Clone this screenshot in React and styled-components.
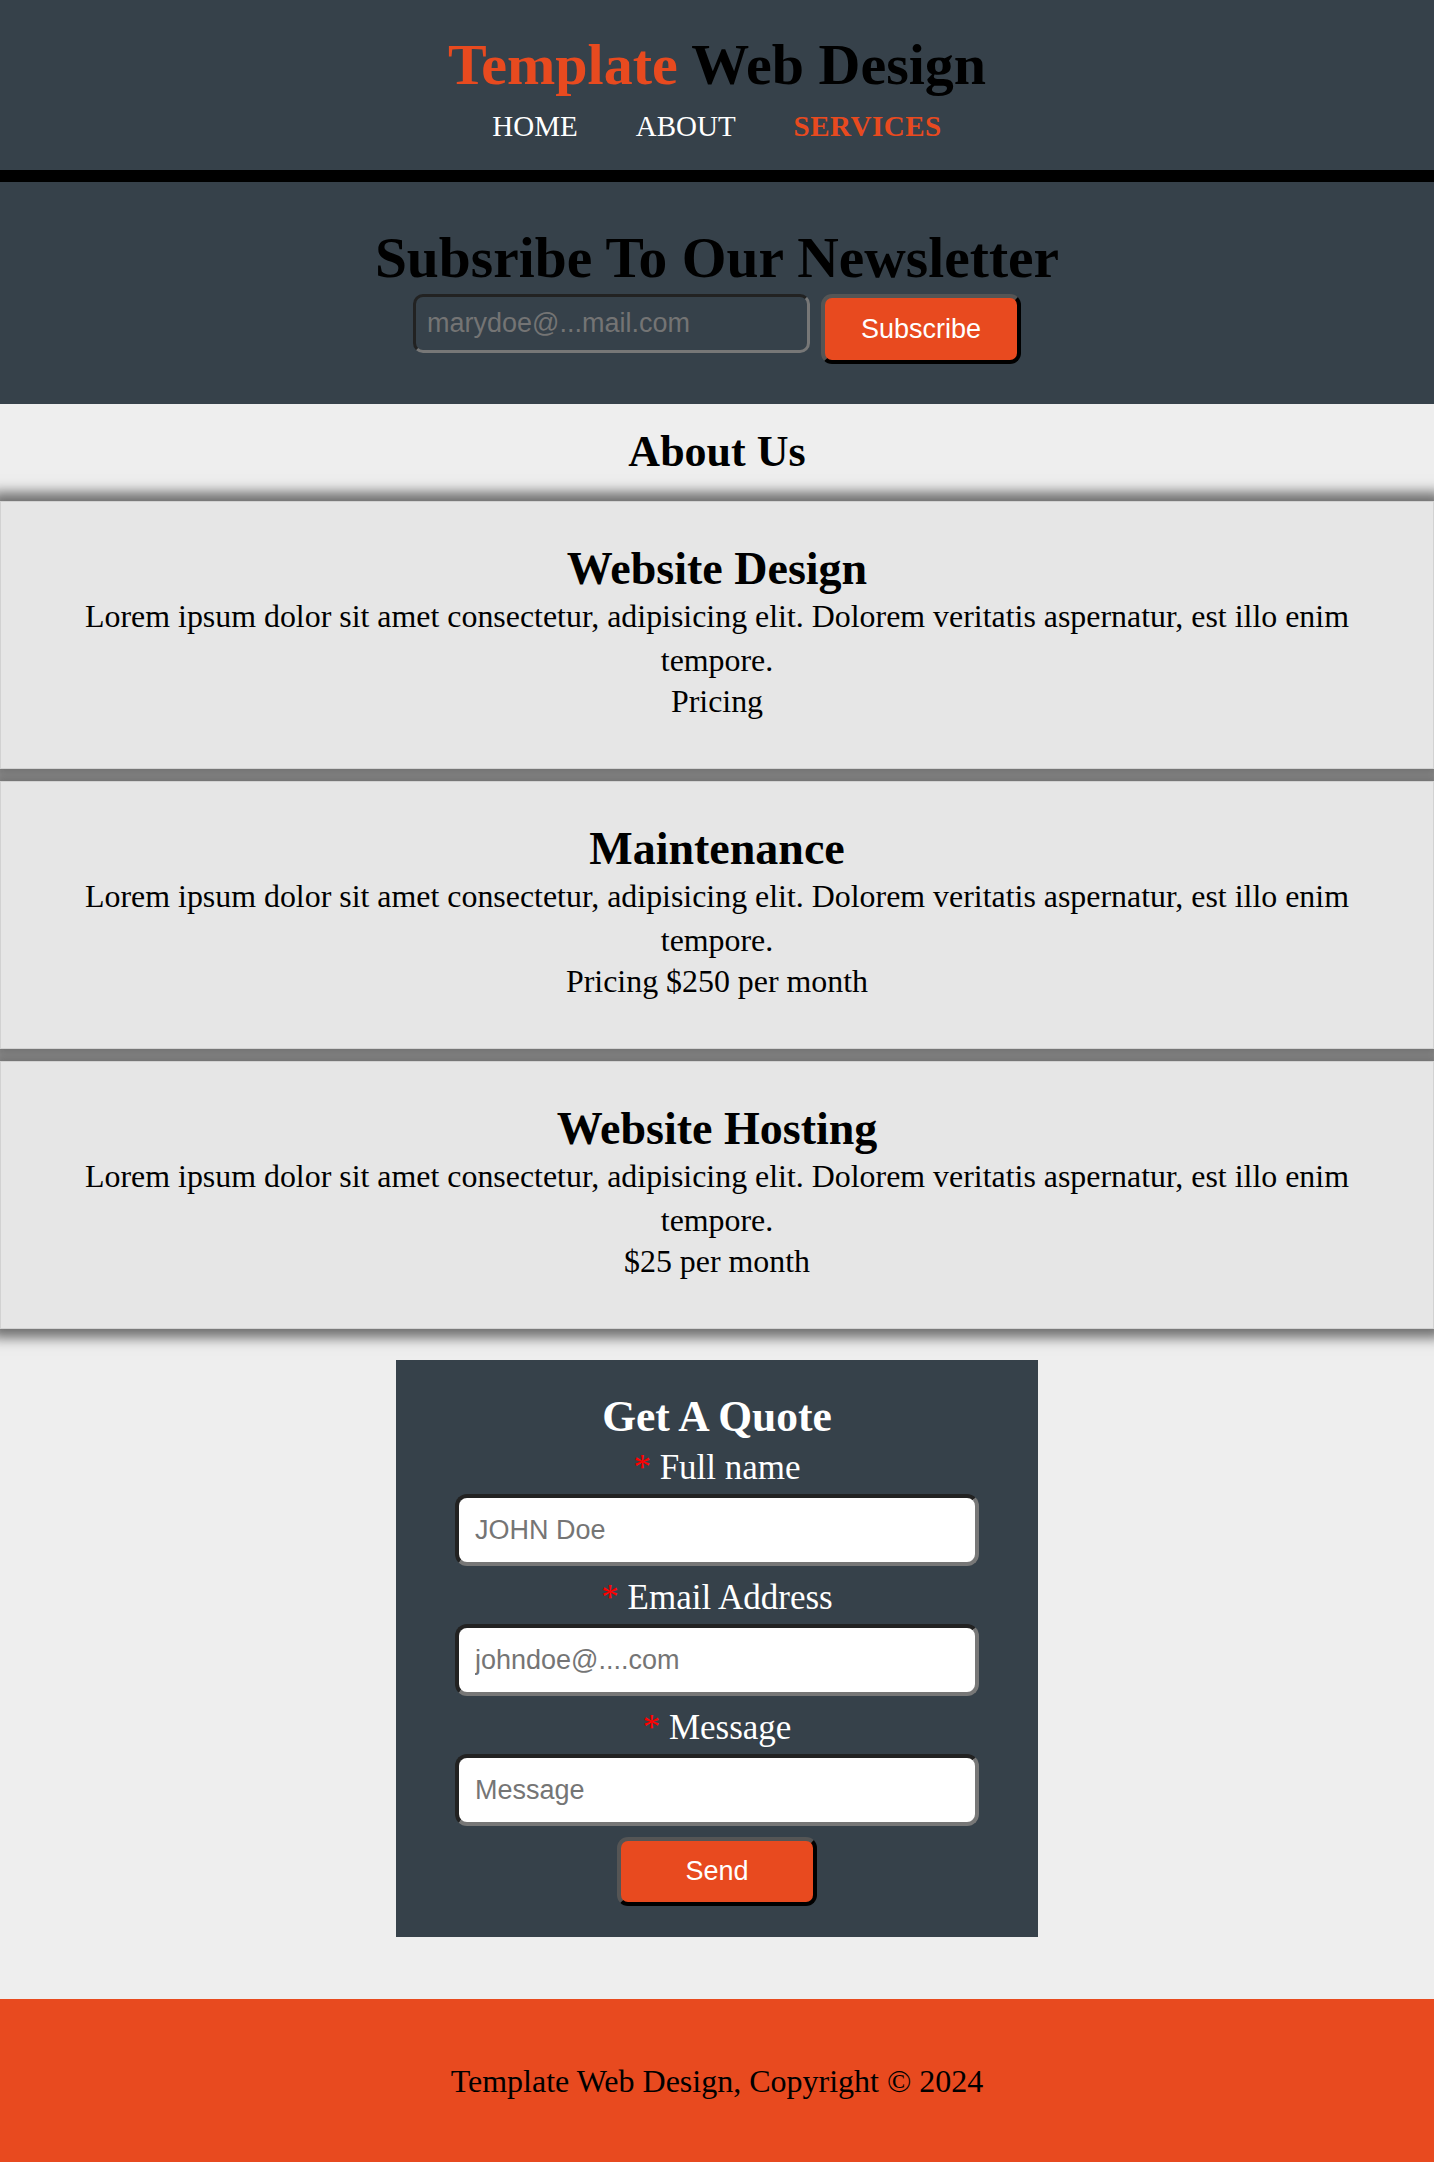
import React from 'react';
import styled, { createGlobalStyle } from 'styled-components';

const ORANGE = '#e84a1f';
const SLATE = '#36414a';

const GlobalStyle = createGlobalStyle`
  html, body { margin: 0; padding: 0; }
  body {
    background: #eeeeee;
    font-family: "Liberation Serif", "Times New Roman", serif;
    color: #000;
  }
  *, *::before, *::after { box-sizing: border-box; }
`;

const Header = styled.header`
  background: ${SLATE};
  border-bottom: 12px solid #000;
  padding: 33px 0 26px;
  text-align: center;
`;

const Brand = styled.h1`
  margin: 0;
  font-size: 58px;
  line-height: 64px;
  font-weight: 700;
  color: #000;
`;

const BrandAccent = styled.span`
  color: ${ORANGE};
`;

const Nav = styled.nav`
  margin-top: 11px;
  display: flex;
  justify-content: center;
  gap: 58px;
`;

const NavLink = styled.a`
  font-size: 29px;
  line-height: 36px;
  text-decoration: none;
  color: ${(p) => (p.$active ? ORANGE : '#fff')};
  font-weight: ${(p) => (p.$active ? 700 : 400)};
  letter-spacing: ${(p) => (p.$active ? '0.5px' : '0')};
`;

const Newsletter = styled.section`
  background: ${SLATE};
  padding: 44px 0 40px;
  text-align: center;
`;

const BigTitle = styled.h2`
  margin: 0;
  font-size: 57.5px;
  line-height: 64px;
  font-weight: 700;
  color: #000;
`;

const SubscribeRow = styled.form`
  margin: 4px 0 0;
  display: flex;
  justify-content: center;
  align-items: flex-start;
  gap: 11px;
`;

const EmailInput = styled.input`
  width: 397px;
  height: 59px;
  padding: 0 11px;
  border: 3px solid;
  border-color: #222 #777 #777 #222;
  border-radius: 10px;
  background: transparent;
  font: 27px "Liberation Sans", Arial, sans-serif;
  color: #ddd;
  outline: none;
  &::placeholder { color: #747474; }
`;

const OrangeButton = styled.button`
  width: 200px;
  height: ${(p) => p.$h || '70px'};
  margin-top: ${(p) => p.$mt || '0'};
  border: 4px solid;
  border-color: #555 #000 #000 #555;
  border-radius: 11px;
  background: ${ORANGE};
  color: #fff;
  font: 27px "Liberation Sans", Arial, sans-serif;
  cursor: pointer;
`;

const About = styled.section`
  padding: 20px 0 31px;
  text-align: center;
`;

const SectionTitle = styled.h2`
  margin: 0 0 22px;
  font-size: 44px;
  line-height: 55px;
  font-weight: 700;
`;

const CardList = styled.div`
  display: flex;
  flex-direction: column;
  gap: 12px;
  isolation: isolate;
`;

const Card = styled.article`
  position: relative;
  background: #e6e6e6;
  border: 1px solid #d2d2d2;
  padding: 41px 40px 48px;
  text-align: center;
  &::before {
    content: '';
    position: absolute;
    inset: -1px;
    z-index: -1;
    box-shadow: 0 0 12px 9px #707070;
  }
`;

const CardTitle = styled.h3`
  margin: 0;
  font-size: 46px;
  line-height: 52px;
  font-weight: 700;
`;

const CardText = styled.p`
  margin: 0;
  font-size: 31.9px;
  line-height: 44px;
`;

const CardPrice = styled.p`
  margin: 1px 0 0;
  font-size: 31.9px;
  line-height: 36px;
`;

const QuoteSection = styled.section`
  padding: 0 0 62px;
`;

const QuoteBox = styled.form`
  width: 642px;
  margin: 0 auto;
  padding: 32px 0 31px;
  background: ${SLATE};
  display: flex;
  flex-direction: column;
  align-items: center;
`;

const QuoteTitle = styled.h2`
  margin: 0 0 8px;
  font-size: 43.5px;
  line-height: 48px;
  font-weight: 700;
  color: #fff;
`;

const Field = styled.div`
  display: flex;
  flex-direction: column;
  align-items: center;
  & + & { margin-top: 12px; }
`;

const Label = styled.label`
  margin-bottom: 6px;
  font-size: 35px;
  line-height: 40px;
  color: #fff;
`;

const Required = styled.span`
  color: #ff0000;
`;

const TextInput = styled.input`
  width: 524px;
  height: 72px;
  padding: 0 16px;
  border: 4px solid;
  border-color: #222 #777 #777 #222;
  border-radius: 12px;
  background: #fff;
  font: 27px "Liberation Sans", Arial, sans-serif;
  color: #222;
  outline: none;
  &::placeholder { color: #757575; }
`;

const Footer = styled.footer`
  height: 164px;
  background: ${ORANGE};
  display: flex;
  align-items: center;
  justify-content: center;
  font-size: 32px;
  color: #000;
`;

const services = [
  { title: 'Website Design', price: 'Pricing' },
  { title: 'Maintenance', price: 'Pricing $250 per month' },
  { title: 'Website Hosting', price: '$25 per month' },
];

const lorem =
  'Lorem ipsum dolor sit amet consectetur, adipisicing elit. Dolorem veritatis aspernatur, est illo enim tempore.';

const fields = [
  { id: 'name', label: 'Full name', placeholder: 'JOHN Doe', type: 'text' },
  { id: 'email', label: 'Email Address', placeholder: 'johndoe@....com', type: 'email' },
  { id: 'message', label: 'Message', placeholder: 'Message', type: 'text' },
];

export default function App() {
  return (
    <>
      <GlobalStyle />
      <Header>
        <Brand>
          <BrandAccent>Template</BrandAccent> Web Design
        </Brand>
        <Nav>
          <NavLink href="#">HOME</NavLink>
          <NavLink href="#">ABOUT</NavLink>
          <NavLink href="#" $active>SERVICES</NavLink>
        </Nav>
      </Header>

      <Newsletter>
        <BigTitle>Subsribe To Our Newsletter</BigTitle>
        <SubscribeRow onSubmit={(e) => e.preventDefault()}>
          <EmailInput type="email" placeholder="marydoe@...mail.com" />
          <OrangeButton type="submit">Subscribe</OrangeButton>
        </SubscribeRow>
      </Newsletter>

      <About>
        <SectionTitle>About Us</SectionTitle>
        <CardList>
          {services.map((s) => (
            <Card key={s.title}>
              <CardTitle>{s.title}</CardTitle>
              <CardText>{lorem}</CardText>
              <CardPrice>{s.price}</CardPrice>
            </Card>
          ))}
        </CardList>
      </About>

      <QuoteSection>
        <QuoteBox onSubmit={(e) => e.preventDefault()}>
          <QuoteTitle>Get A Quote</QuoteTitle>
          {fields.map((f) => (
            <Field key={f.id}>
              <Label htmlFor={f.id}>
                <Required>*</Required> {f.label}
              </Label>
              <TextInput id={f.id} type={f.type} placeholder={f.placeholder} />
            </Field>
          ))}
          <OrangeButton type="submit" $h="69px" $mt="11px">Send</OrangeButton>
        </QuoteBox>
      </QuoteSection>

      <Footer>Template Web Design, Copyright © 2024</Footer>
    </>
  );
}
